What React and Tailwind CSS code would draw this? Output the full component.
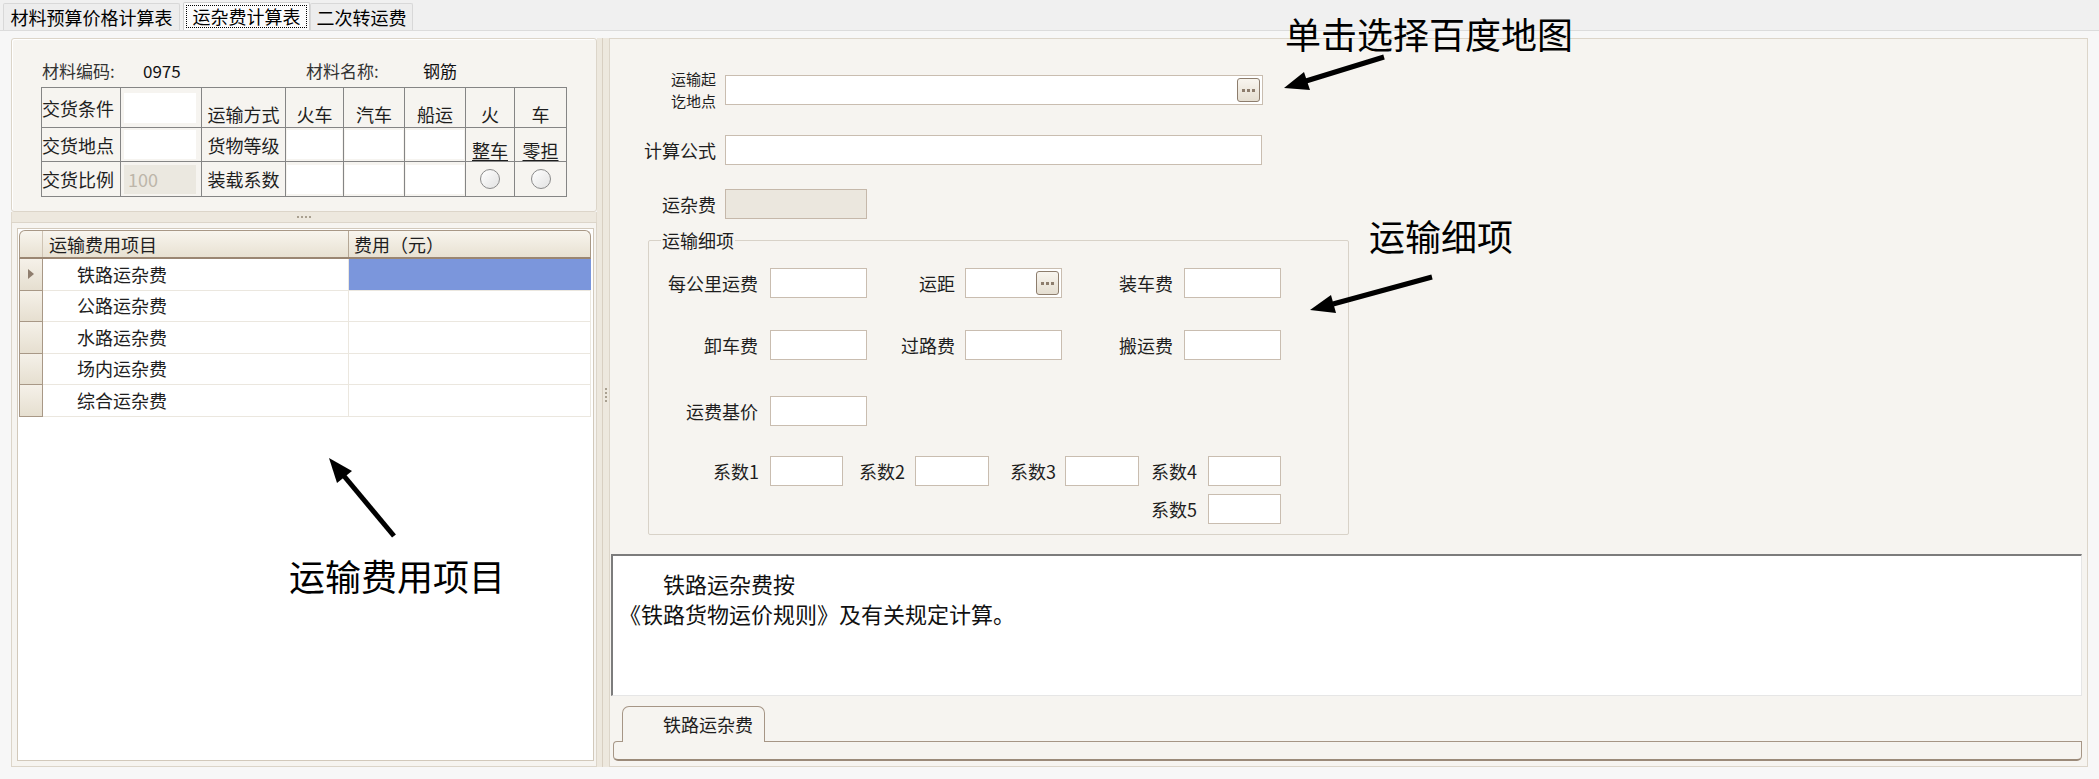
import React from "react";

function Inp({ w, gray = false, btn = false }) {
  return (
    <div
      className={`${w} h-[30px] border ${gray ? "bg-[#ebe7de] border-[#c5b8aa]" : "bg-white border-[#c9bdb0]"} flex items-center justify-end pr-[2px]`}
    >
      {btn && <Dots />}
    </div>
  );
}

function Dots() {
  return (
    <div className="w-[23px] h-[24px] rounded-[3px] border border-[#8d7d6d] bg-linear-to-b from-[#f8f5ef] to-[#e5ded1] flex items-center justify-center gap-[2px]">
      <span className="w-[3px] h-[3px] bg-[#8d7d6d]" />
      <span className="w-[3px] h-[3px] bg-[#8d7d6d]" />
      <span className="w-[3px] h-[3px] bg-[#8d7d6d]" />
    </div>
  );
}

function Radio() {
  return (
    <div className="mx-auto w-[20px] h-[20px] rounded-full border border-[#8a8a8a] bg-linear-to-br from-white to-[#e2e2e2]" />
  );
}

const td = "border border-[#858585] p-0";

function TopTable() {
  return (
    <table className="border-collapse table-fixed w-[525px] mt-[5px] text-[18px] leading-[22px]">
      <colgroup>
        <col className="w-[79px]" />
        <col className="w-[81px]" />
        <col className="w-[84px]" />
        <col className="w-[58px]" />
        <col className="w-[61px]" />
        <col className="w-[61px]" />
        <col className="w-[49px]" />
        <col className="w-[52px]" />
      </colgroup>
      <tbody>
        <tr className="h-[40px]">
          <td className={`${td} text-left align-middle`}>交货条件</td>
          <td className={td}>
            <div className="h-[30px] bg-white ml-[3px] mr-[5px]" />
          </td>
          <td className={`${td} text-center align-bottom pb-[2px]`}>运输方式</td>
          <td className={`${td} text-center align-bottom pb-[2px]`}>火车</td>
          <td className={`${td} text-center align-bottom pb-[2px]`}>汽车</td>
          <td className={`${td} text-center align-bottom pb-[2px]`}>船运</td>
          <td className={`${td} text-center align-bottom pb-[2px]`}>火</td>
          <td className={`${td} text-center align-bottom pb-[2px]`}>车</td>
        </tr>
        <tr className="h-[34px]">
          <td className={`${td} text-left align-middle`}>交货地点</td>
          <td className={td}>
            <div className="h-[29px] bg-white ml-[3px] mr-[5px]" />
          </td>
          <td className={`${td} text-center align-middle`}>货物等级</td>
          <td className={td}>
            <div className="h-[29px] bg-white mx-[1px]" />
          </td>
          <td className={td}>
            <div className="h-[29px] bg-white mx-[1px]" />
          </td>
          <td className={td}>
            <div className="h-[29px] bg-white mx-[1px]" />
          </td>
          <td className={`${td} text-center align-bottom`}>
            <span className="underline underline-offset-[2px]">整车</span>
          </td>
          <td className={`${td} text-center align-bottom`}>
            <span className="underline underline-offset-[2px]">零担</span>
          </td>
        </tr>
        <tr className="h-[35px]">
          <td className={`${td} text-left align-middle`}>交货比例</td>
          <td className={td}>
            <div className="h-[29px] bg-[#ebe8e0] ml-[3px] mr-[5px] pl-[4px] flex items-center text-[#bdb6aa]">100</div>
          </td>
          <td className={`${td} text-center align-middle`}>装载系数</td>
          <td className={td}>
            <div className="h-[29px] bg-white mx-[1px]" />
          </td>
          <td className={td}>
            <div className="h-[29px] bg-white mx-[1px]" />
          </td>
          <td className={td}>
            <div className="h-[29px] bg-white mx-[1px]" />
          </td>
          <td className={`${td} align-middle`}>
            <Radio />
          </td>
          <td className={`${td} align-middle`}>
            <Radio />
          </td>
        </tr>
      </tbody>
    </table>
  );
}

const rows = ["铁路运杂费", "公路运杂费", "水路运杂费", "场内运杂费", "综合运杂费"];

function Grid() {
  return (
    <div className="flex flex-col">
      <div className="flex h-[29px] rounded-t-[6px] border border-[#a89886] border-b-2 border-b-[#9a8672] bg-linear-to-b from-[#f8f5ee] to-[#e8e1d2]">
        <div className="w-[23px] border-r border-[#cfc4b4]" />
        <div className="w-[306px] border-r border-[#b5a795] pl-[6px] flex items-center">运输费用项目</div>
        <div className="flex-1 pl-[5px] flex items-center">费用（元）</div>
      </div>
      {rows.map((r, i) => (
        <div key={r} className="flex h-[31.5px]">
          <div className="w-[24px] border border-t-0 border-[#a89886] bg-linear-to-b from-[#f5f1e9] to-[#e6dfd0] flex items-center pl-[8px]">
            {i === 0 && (
              <svg width="6" height="10" viewBox="0 0 6 10">
                <polygon points="0,0 6,5 0,10" fill="#8f7e6e" />
              </svg>
            )}
          </div>
          <div className="w-[306px] border-b border-r border-[#ebe7df] pl-[34px] flex items-center">{r}</div>
          <div
            className={
              i === 0
                ? "flex-1 bg-[#7b96dc] border-b border-[#ebe7df]"
                : "flex-1 border-b border-r border-[#ebe7df]"
            }
          />
        </div>
      ))}
    </div>
  );
}

function LeftColumn() {
  return (
    <div className="w-[586px] flex flex-col">
      <div className="h-[174px] border border-[#dcd5c9] rounded-[3px] bg-[#f6f4f0] pl-[29px] pt-[21px] shadow-[inset_1px_1px_0_#ffffff]">
        <div className="h-[22px] flex items-center ml-[1px] text-[17px] text-[#333]">
          <span className="w-[101px]">材料编码:</span>
          <span className="w-[163px] text-[#111]">0975</span>
          <span className="w-[117px]">材料名称:</span>
          <span className="text-[#111]">钢筋</span>
        </div>
        <TopTable />
      </div>
      <div className="h-[10px] flex items-center justify-center gap-[2px] bg-[#ede8de] border-x border-[#e0d9cd]">
        <span className="w-[2px] h-[2px] bg-[#a9a090]" />
        <span className="w-[2px] h-[2px] bg-[#a9a090]" />
        <span className="w-[2px] h-[2px] bg-[#a9a090]" />
        <span className="w-[2px] h-[2px] bg-[#a9a090]" />
      </div>
      <div className="flex-1 border border-[#dcd5c9] bg-[#f6f4f0] p-[5px] pr-[2px]">
        <div className="h-full border border-[#d2c9bb] bg-white p-[1px] pr-[2px]">
          <Grid />
        </div>
      </div>
    </div>
  );
}

function VSplitter() {
  return (
    <div className="w-[12px] flex bg-[#ede8de]">
      <div className="w-[6px] border-r border-[#d8cfc1]" />
      <div className="flex-1 flex flex-col items-center pt-[350px] gap-[2px]">
        <span className="w-[2px] h-[2px] bg-[#a9a090]" />
        <span className="w-[2px] h-[2px] bg-[#a9a090]" />
        <span className="w-[2px] h-[2px] bg-[#a9a090]" />
        <span className="w-[2px] h-[2px] bg-[#a9a090]" />
      </div>
    </div>
  );
}

function Lbl({ w, children, cls = "" }) {
  return <div className={`${w} text-right shrink-0 ${cls}`}>{children}</div>;
}

function RightColumn() {
  return (
    <div className="w-[1479px] border border-[#dcd5c9] bg-[#f6f4f0] flex flex-col text-[18px]">
      <div className="h-[507px] flex flex-col">
        <div className="mt-[36px] flex items-center h-[30px]">
          <div className="w-[106px] mr-[9px] text-right leading-[22px] text-[15px]">
            <div>运输起</div>
            <div>讫地点</div>
          </div>
          <Inp w="w-[538px]" btn />
        </div>
        <div className="mt-[30px] flex items-center h-[30px]">
          <div className="w-[106px] mr-[9px] text-right">计算公式</div>
          <Inp w="w-[537px]" />
        </div>
        <div className="mt-[24px] flex items-center h-[30px]">
          <div className="w-[106px] mr-[9px] text-right">运杂费</div>
          <Inp w="w-[142px]" gray />
        </div>
        <fieldset className="mt-[10px] ml-[38px] w-[701px] border border-[#d8d2c8] rounded-[2px] px-0 pb-[10px]">
          <legend className="ml-[12px] px-[1px] leading-[22px] text-[18px]">运输细项</legend>
          <div className="mt-[17px] flex items-center h-[30px]">
            <Lbl w="w-[109px]" cls="mr-[12px]">每公里运费</Lbl>
            <Inp w="w-[97px]" />
            <Lbl w="w-[88px]" cls="mr-[10px]">运距</Lbl>
            <Inp w="w-[97px]" btn />
            <Lbl w="w-[111px]" cls="mr-[11px]">装车费</Lbl>
            <Inp w="w-[97px]" />
          </div>
          <div className="mt-[32px] flex items-center h-[30px]">
            <Lbl w="w-[109px]" cls="mr-[12px]">卸车费</Lbl>
            <Inp w="w-[97px]" />
            <Lbl w="w-[88px]" cls="mr-[10px]">过路费</Lbl>
            <Inp w="w-[97px]" />
            <Lbl w="w-[111px]" cls="mr-[11px]">搬运费</Lbl>
            <Inp w="w-[97px]" />
          </div>
          <div className="mt-[36px] flex items-center h-[30px]">
            <Lbl w="w-[109px]" cls="mr-[12px]">运费基价</Lbl>
            <Inp w="w-[97px]" />
          </div>
          <div className="mt-[30px] flex items-center h-[30px]">
            <Lbl w="w-[110px]" cls="mr-[11px]">系数1</Lbl>
            <Inp w="w-[73px]" />
            <Lbl w="w-[62px]" cls="mr-[10px]">系数2</Lbl>
            <Inp w="w-[74px]" />
            <Lbl w="w-[67px]" cls="mr-[9px]">系数3</Lbl>
            <Inp w="w-[74px]" />
            <Lbl w="w-[58px]" cls="mr-[11px]">系数4</Lbl>
            <Inp w="w-[73px]" />
          </div>
          <div className="mt-[8px] flex items-center h-[30px]">
            <Lbl w="w-[548px]" cls="mr-[11px]">系数5</Lbl>
            <Inp w="w-[73px]" />
          </div>
        </fieldset>
      </div>
      <div className="mt-[8px] ml-[1px] w-[1471px] h-[142px] bg-white border-t-2 border-l-2 border-[#7c7c7c] border-b border-r border-b-[#e6e6e6] border-r-[#e6e6e6] pt-[12px] pl-[6px] text-[22px] leading-[30px] text-[#111]">
        <div className="pl-[44px]">铁路运杂费按</div>
        <div>《铁路货物运价规则》及有关规定计算。</div>
      </div>
      <div className="mt-[10px] ml-[3px] w-[1469px] flex flex-col">
        <div className="ml-[9px] w-[143px] h-[36px] -mb-[1px] relative border border-b-0 border-[#a69686] rounded-t-[7px] bg-[#f6f4f0] pl-[40px] flex items-center">
          铁路运杂费
        </div>
        <div className="h-[20px] border border-[#a69686] border-b-2 border-b-[#9b8a79] rounded-b-[5px] rounded-tl-[4px] bg-[#f6f4f0]" />
      </div>
    </div>
  );
}

function Annotations() {
  return (
    <div className="absolute inset-0 pointer-events-none text-black">
      <svg className="absolute inset-0" width="2099" height="779" viewBox="0 0 2099 779">
        <line x1="1384" y1="57" x2="1306" y2="81" stroke="#000" strokeWidth="5" />
        <polygon points="1284,88 1310,90 1304,72" fill="#000" />
        <line x1="1432" y1="277" x2="1333" y2="304" stroke="#000" strokeWidth="5" />
        <polygon points="1310,310 1336,313 1331,295" fill="#000" />
        <line x1="394" y1="536" x2="344" y2="476" stroke="#000" strokeWidth="5" />
        <polygon points="329,458 352,471 337,483" fill="#000" />
      </svg>
      <div className="absolute left-[1285px] top-[15px] text-[36px] leading-none">单击选择百度地图</div>
      <div className="absolute left-[1369px] top-[217px] text-[36px] leading-none">运输细项</div>
      <div className="absolute left-[289px] top-[557px] text-[36px] leading-none">运输费用项目</div>
    </div>
  );
}

export default function App() {
  return (
    <div className="relative w-[2099px] h-[779px] overflow-hidden bg-[#f0f0f0] font-['Noto_Sans_CJK_SC','Noto_Sans',sans-serif] text-[18px] text-[#1e1e1e] flex flex-col">
      <div className="h-[30px] flex items-end pl-[3px] text-[18px] text-black">
        <div className="w-[177px] h-[27px] border border-b-0 border-[#d8d8d8] bg-[#ededed] rounded-t-[2px] flex items-center justify-center">
          材料预算价格计算表
        </div>
        <div className="ml-[3px] w-[127px] h-[28px] border border-b-0 border-[#d0d0d0] bg-[#fbfbfb] rounded-t-[2px] p-[2px]">
          <div className="h-full border border-dotted border-black flex items-center justify-center">运杂费计算表</div>
        </div>
        <div className="w-[103px] h-[27px] border border-b-0 border-[#d8d8d8] bg-[#ededed] rounded-t-[2px] flex items-center justify-center">
          二次转运费
        </div>
      </div>
      <div className="flex-1 flex bg-[#f7f7f7] border-t border-[#dcdcdc] pt-[7px] pl-[11px] pr-[11px] pb-[12px]">
        <LeftColumn />
        <VSplitter />
        <RightColumn />
      </div>
      <Annotations />
    </div>
  );
}
